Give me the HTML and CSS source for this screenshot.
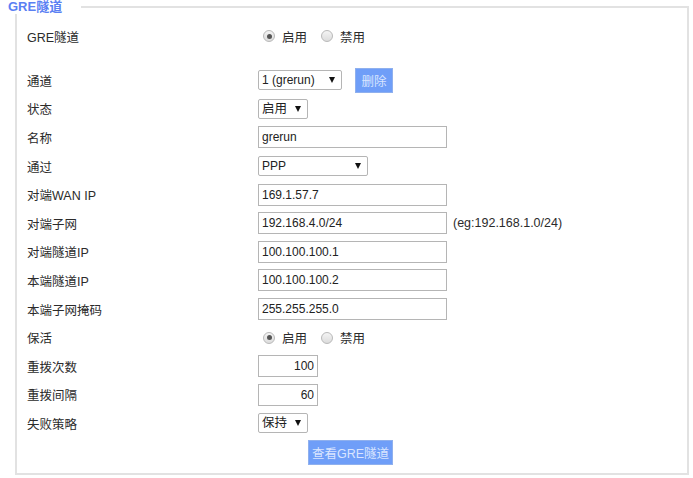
FILE: index.html
```html
<!DOCTYPE html>
<html lang="zh-CN">
<head>
<meta charset="utf-8">
<title>GRE隧道</title>
<link rel="stylesheet" href="styles.css">
</head>
<body>
<fieldset class="panel">
  <legend class="panel-title">GRE隧道</legend>

  <div class="row row-first">
    <div class="label">GRE隧道</div>
    <div class="ctrl">
      <label class="radio"><input type="radio" name="gre" checked><span>启用</span></label>
      <label class="radio"><input type="radio" name="gre"><span>禁用</span></label>
    </div>
  </div>

  <div class="row">
    <div class="label">通道</div>
    <div class="ctrl">
      <span class="sel sel-tunnel"><select><option>1 (grerun)</option></select></span>
      <button class="btn btn-del" type="button">删除</button>
    </div>
  </div>

  <div class="row">
    <div class="label">状态</div>
    <div class="ctrl"><span class="sel sel-small"><select><option>启用</option></select></span></div>
  </div>

  <div class="row">
    <div class="label">名称</div>
    <div class="ctrl"><input class="txt" type="text" value="grerun"></div>
  </div>

  <div class="row">
    <div class="label">通过</div>
    <div class="ctrl"><span class="sel sel-ppp"><select><option>PPP</option></select></span></div>
  </div>

  <div class="row">
    <div class="label">对端WAN IP</div>
    <div class="ctrl"><input class="txt" type="text" value="169.1.57.7"></div>
  </div>

  <div class="row">
    <div class="label">对端子网</div>
    <div class="ctrl"><input class="txt" type="text" value="192.168.4.0/24"><span class="hint">(eg:192.168.1.0/24)</span></div>
  </div>

  <div class="row">
    <div class="label">对端隧道IP</div>
    <div class="ctrl"><input class="txt" type="text" value="100.100.100.1"></div>
  </div>

  <div class="row">
    <div class="label">本端隧道IP</div>
    <div class="ctrl"><input class="txt" type="text" value="100.100.100.2"></div>
  </div>

  <div class="row">
    <div class="label">本端子网掩码</div>
    <div class="ctrl"><input class="txt" type="text" value="255.255.255.0"></div>
  </div>

  <div class="row">
    <div class="label">保活</div>
    <div class="ctrl">
      <label class="radio"><input type="radio" name="keep" checked><span>启用</span></label>
      <label class="radio"><input type="radio" name="keep"><span>禁用</span></label>
    </div>
  </div>

  <div class="row">
    <div class="label">重拨次数</div>
    <div class="ctrl"><input class="txt txt-num" type="text" value="100"></div>
  </div>

  <div class="row">
    <div class="label">重拨间隔</div>
    <div class="ctrl"><input class="txt txt-num" type="text" value="60"></div>
  </div>

  <div class="row">
    <div class="label">失败策略</div>
    <div class="ctrl"><span class="sel sel-small"><select><option>保持</option></select></span></div>
  </div>

  <div class="row row-action">
    <button class="btn btn-view" type="button">查看GRE隧道</button>
  </div>
</fieldset>
</body>
</html>
```

FILE: styles.css
```css
html, body {
  margin: 0;
  padding: 0;
  background: #ffffff;
}

body {
  font-family: "Liberation Sans", "Noto Sans CJK SC", sans-serif;
  font-size: 12px;
  color: #2b2b2b;
  width: 693px;
  height: 478px;
  overflow: hidden;
}

.panel {
  margin: 0 4px 0 15px;
  padding: 8px 10px 7px 10px;
  border: 2px solid #e2e2e2;
  min-width: 0;
}

.panel-title {
  margin-left: -19px;
  padding: 0 19px 0 0;
  font-size: 13px;
  line-height: 14px;
  font-weight: bold;
  color: #5b80f3;
}

.row {
  display: flex;
  align-items: center;
  height: 28.6px;
}

.row-first {
  margin-bottom: 15.4px;
}

.label {
  width: 231px;
  flex: none;
  font-size: 12.5px;
}

.ctrl {
  display: flex;
  align-items: center;
}

.radio {
  display: inline-flex;
  align-items: center;
  margin-left: 5px;
  margin-right: 9px;
  font-size: 12.5px;
}

.radio input {
  appearance: none;
  -webkit-appearance: none;
  width: 12px;
  height: 12px;
  margin: 0 7px 0 0;
  border: 1px solid #b9b9b9;
  border-radius: 50%;
  background: linear-gradient(#f4f4f4, #dcdcdc);
  box-sizing: border-box;
  position: relative;
}

.radio input:checked::after {
  content: "";
  position: absolute;
  left: 2.5px;
  top: 2.5px;
  width: 5px;
  height: 5px;
  border-radius: 50%;
  background: #555;
}

.sel {
  position: relative;
  display: inline-block;
}

.sel select {
  appearance: none;
  -webkit-appearance: none;
  height: 20px;
  margin: 0;
  padding: 0 16px 0 3px;
  border: 1px solid #b5b5b5;
  border-radius: 2px;
  background: #fff;
  font-family: "Liberation Sans", "Noto Sans CJK SC", sans-serif;
  font-size: 12px;
  color: #222;
  box-sizing: border-box;
}

.sel::after {
  content: "";
  position: absolute;
  top: 7px;
  right: 7px;
  border-left: 3px solid transparent;
  border-right: 3px solid transparent;
  border-top: 6px solid #111;
  pointer-events: none;
}

.sel-tunnel select { width: 84px; }
.sel-small select { width: 50px; font-size: 12.5px; }
.sel-ppp select { width: 110px; }

.txt {
  width: 189px;
  height: 22px;
  margin: 0;
  padding: 0 3px;
  border: 1px solid #b5b5b5;
  box-sizing: border-box;
  font-family: "Liberation Sans", "Noto Sans CJK SC", sans-serif;
  font-size: 12px;
  color: #222;
  background: #fff;
}

.txt-num {
  width: 60px;
  text-align: right;
}

.hint {
  margin-left: 6px;
  font-size: 12.5px;
}

.btn {
  height: 25px;
  margin: 0;
  padding: 0;
  border: 1px solid #8fb0ee;
  background: #6f9ef8;
  color: #d9e5ff;
  font-family: "Liberation Sans", "Noto Sans CJK SC", sans-serif;
  font-size: 12.5px;
  box-sizing: border-box;
}

.btn-del {
  width: 38px;
  margin-left: 13px;
}

.btn-view {
  width: 85px;
  margin-left: 281px;
}
```
